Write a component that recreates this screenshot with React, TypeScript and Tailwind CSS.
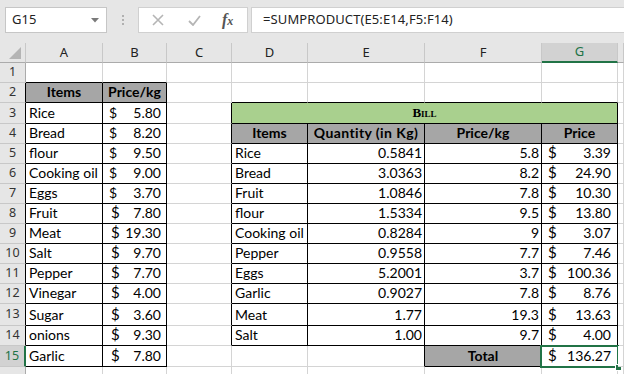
import React from "react";

const COLS = [
  "w-[26px]",
  "w-[77px]",
  "w-[64px]",
  "w-[65px]",
  "w-[76px]",
  "w-[117px]",
  "w-[117px]",
  "w-[76px]",
  "flex-1",
];
const LETTERS = ["", "A", "B", "C", "D", "E", "F", "G", ""];

const ROWH = [
  "",
  "h-[20px]",
  "h-[20px]",
  "h-[21px]",
  "h-[20px]",
  "h-[20px]",
  "h-[20px]",
  "h-[20px]",
  "h-[20px]",
  "h-[20px]",
  "h-[20px]",
  "h-[20px]",
  "h-[20px]",
  "h-[22px]",
  "h-[20px]",
  "h-[21px]",
];

const LEFT: [string, string, boolean][] = [
  ["Rice", "5.80", false],
  ["Bread", "8.20", false],
  ["flour", "9.50", false],
  ["Cooking oil", "9.00", false],
  ["Eggs", "3.70", false],
  ["Fruit", "7.80", true],
  ["Meat", "19.30", true],
  ["Salt", "9.70", true],
  ["Pepper", "7.70", true],
  ["Vinegar", "4.00", true],
  ["Sugar", "3.60", true],
  ["onions", "9.30", true],
  ["Garlic", "7.80", true],
];

const BILL: [string, string, string, string][] = [
  ["Rice", "0.5841", "5.8", "3.39"],
  ["Bread", "3.0363", "8.2", "24.90"],
  ["Fruit", "1.0846", "7.8", "10.30"],
  ["flour", "1.5334", "9.5", "13.80"],
  ["Cooking oil", "0.8284", "9", "3.07"],
  ["Pepper", "0.9558", "7.7", "7.46"],
  ["Eggs", "5.2001", "3.7", "100.36"],
  ["Garlic", "0.9027", "7.8", "8.76"],
  ["Meat", "1.77", "19.3", "13.63"],
  ["Salt", "1.00", "9.7", "4.00"],
];

function inTable(r: number, c: number) {
  if (c >= 1 && c <= 2 && r >= 2 && r <= 15) return true;
  if (c >= 4 && c <= 7 && r >= 3 && r <= 14) return true;
  if ((c === 6 || c === 7) && r === 15) return true;
  return false;
}

const cellFont = "font-['Lato','Carlito',sans-serif] text-[14px] leading-[17px] text-black";

function Cell({
  r,
  c,
  children,
  bg = "bg-white",
  className = "",
}: {
  r: number;
  c: number;
  children?: React.ReactNode;
  bg?: string;
  className?: string;
}) {
  const rightBlack = inTable(r, c) || inTable(r, c + 1);
  const bottomBlack = inTable(r, c) || inTable(r + 1, c);
  return (
    <div
      className={`relative shrink-0 ${COLS[c]} ${bg} border-r border-b ${
        rightBlack ? "border-r-black" : "border-r-[#d4d4d4]"
      } ${bottomBlack ? "border-b-black" : "border-b-[#d4d4d4]"} flex items-end pb-[2px] ${cellFont} ${className}`}
    >
      {children}
    </div>
  );
}

function Money({ v, big = false, pl = "pl-[7px]", pr = "pr-[5px]" }: { v: string; big?: boolean; pl?: string; pr?: string }) {
  return (
    <div className={`flex w-full justify-between ${pl} ${pr}`}>
      <span className={big ? "text-[15px]" : ""}>$</span>
      <span>{v}</span>
    </div>
  );
}

function RowHeader({ r }: { r: number }) {
  const sel = r === 15;
  const black = r >= 2 && r <= 14;
  return (
    <div
      className={`shrink-0 ${COLS[0]} ${sel ? "bg-[#d2d2d2] text-[#217346] border-r-2 border-r-[#217346]" : "bg-[#e6e6e6] text-[#333] border-r " + (black ? "border-r-black" : "border-r-[#ababab]")} border-b border-b-[#c8c8c8] flex items-center justify-center font-['Noto_Sans',sans-serif] text-[12.5px]`}
    >
      {r}
    </div>
  );
}

function Row({ r }: { r: number }) {
  const cells: React.ReactNode[] = [];
  let a: React.ReactNode = null;
  let aBg = "bg-white";
  let aCls = "pl-[3px]";
  if (r === 2) {
    a = "Items";
    aBg = "bg-[#a6a6a6]";
    aCls = "justify-center font-bold";
  } else if (r >= 3 && r <= 15) a = LEFT[r - 3][0];
  cells.push(
    <Cell key="a" r={r} c={1} bg={aBg} className={aCls}>
      {a}
    </Cell>
  );
  if (r === 2) {
    cells.push(
      <Cell key="b" r={r} c={2} bg="bg-[#a6a6a6]" className="justify-center font-bold">
        Price/kg
      </Cell>
    );
  } else if (r >= 3 && r <= 15) {
    const it = LEFT[r - 3];
    cells.push(
      <Cell key="b" r={r} c={2}>
        <Money v={it[1]} big={it[2]} pl={it[2] ? "pl-[8px]" : "pl-[6px]"} />
      </Cell>
    );
  } else {
    cells.push(<Cell key="b" r={r} c={2} />);
  }
  cells.push(<Cell key="c" r={r} c={3} />);
  if (r === 3) {
    cells.push(
      <div
        key="bill"
        className="shrink-0 w-[386px] bg-[#a9d08e] border-r border-b border-r-black border-b-black flex items-end justify-center pb-[3px]"
      >
        <span className="font-['Liberation_Serif',serif] font-bold text-[13px] leading-[15px] [font-variant:small-caps] text-black">
          Bill
        </span>
      </div>
    );
  } else if (r === 4) {
    const hd = ["Items", "Quantity (in Kg)", "Price/kg", "Price"];
    hd.forEach((h, i) =>
      cells.push(
        <Cell key={"h" + i} r={r} c={4 + i} bg="bg-[#a6a6a6]" className={`justify-center font-bold ${i === 1 ? "tracking-[0.4px]" : ""}`}>
          {h}
        </Cell>
      )
    );
  } else if (r >= 5 && r <= 14) {
    const it = BILL[r - 5];
    cells.push(
      <Cell key="d" r={r} c={4} className="pl-[3px]">
        {it[0]}
      </Cell>
    );
    cells.push(
      <Cell key="e" r={r} c={5} className="justify-end pr-[2px]">
        {it[1]}
      </Cell>
    );
    cells.push(
      <Cell key="f" r={r} c={6} className="justify-end pr-[2px]">
        {it[2]}
      </Cell>
    );
    cells.push(
      <Cell key="g" r={r} c={7}>
        <Money v={it[3]} big pl="pl-[6px]" pr="pr-[6px]" />
      </Cell>
    );
  } else if (r === 15) {
    cells.push(<Cell key="d" r={r} c={4} />);
    cells.push(<Cell key="e" r={r} c={5} />);
    cells.push(
      <Cell key="f" r={r} c={6} bg="bg-[#a6a6a6]" className="justify-center font-bold">
        Total
      </Cell>
    );
    cells.push(
      <Cell key="g" r={r} c={7}>
        <Money v="136.27" big pl="pl-[6px]" pr="pr-[6px]" />
        <div className="absolute left-[-2px] top-[-1px] right-[-2px] bottom-[-2px] border-2 border-[#217346] pointer-events-none" />
        <div className="absolute right-[-5px] bottom-[-5px] w-[7px] h-[7px] bg-[#217346] border border-white" />
      </Cell>
    );
  } else {
    for (let c = 4; c <= 7; c++) cells.push(<Cell key={"x" + c} r={r} c={c} />);
  }
  cells.push(<Cell key="h" r={r} c={8} />);
  return (
    <div className={`flex ${ROWH[r]}`}>
      <RowHeader r={r} />
      {cells}
    </div>
  );
}

function FormulaBar() {
  return (
    <div className="h-[43px] bg-[#e6e6e6] relative flex items-start pt-[7px] pl-[5px]">
      <div className="w-[102px] h-[26px] bg-white border border-[#c6c6c6] flex items-center pl-[6px] pr-[6px] justify-between">
        <span className="font-['Noto_Sans',sans-serif] text-[13px] text-[#222]">G15</span>
        <svg width="8" height="5" viewBox="0 0 8 5" className="mr-[1px]">
          <path d="M0 0 L8 0 L4 4.5 Z" fill="#7a7a7a" />
        </svg>
      </div>
      <div className="w-[31px] h-[26px] flex flex-col items-center justify-center gap-[2px]">
        <div className="w-[2px] h-[2px] bg-[#b0b0b0]" />
        <div className="w-[2px] h-[2px] bg-[#b0b0b0]" />
        <div className="w-[2px] h-[2px] bg-[#b0b0b0]" />
      </div>
      <div className="w-[110px] h-[26px] bg-white border border-[#d0d0d0] flex items-center">
        <svg width="12" height="12" viewBox="0 0 12 12" className="ml-[13px]">
          <path d="M1 1 L11 11 M11 1 L1 11" stroke="#b5b5b5" strokeWidth="1.6" />
        </svg>
        <svg width="13" height="11" viewBox="0 0 13 11" className="ml-[24px]">
          <path d="M1 6 L5 10 L12 1" stroke="#b5b5b5" strokeWidth="1.8" fill="none" />
        </svg>
        <span className="ml-[21px] font-['Liberation_Serif',serif] italic font-bold text-[16px] text-[#555] leading-none">
          f<span className="text-[12px]">x</span>
        </span>
      </div>
      <div className="ml-[3px] flex-1 h-[26px] bg-white border border-[#d0d0d0] border-r-0 flex items-center pl-[11px]">
        <span className="font-['Noto_Sans',sans-serif] text-[13px] tracking-[0.1px] text-[#222]">=SUMPRODUCT(E5:E14,F5:F14)</span>
      </div>
    </div>
  );
}

function ColHeader() {
  return (
    <div className="flex h-[20px]">
      <div className={`shrink-0 ${COLS[0]} bg-[#e6e6e6] border-r border-b border-r-[#c8c8c8] border-b-[#ababab] relative`}>
        <svg width="12" height="12" viewBox="0 0 12 12" className="absolute right-[4px] bottom-[3px]">
          <path d="M12 0 L12 12 L0 12 Z" fill="#b4b4b4" />
        </svg>
      </div>
      {LETTERS.slice(1).map((l, i) => {
        const c = i + 1;
        const sel = c === 7;
        return (
          <div
            key={c}
            className={`shrink-0 ${COLS[c]} ${sel ? "bg-[#d2d2d2] text-[#217346] border-b-2 border-b-[#217346]" : "bg-[#e6e6e6] text-[#222] border-b border-b-[#ababab]"} border-r border-r-[#c8c8c8] flex items-center justify-center font-['Noto_Sans',sans-serif] text-[13px]`}
          >
            {l}
          </div>
        );
      })}
    </div>
  );
}

export default function App() {
  const rows = [];
  for (let r = 1; r <= 15; r++) rows.push(<Row key={r} r={r} />);
  return (
    <div className="w-[624px] h-[374px] overflow-hidden bg-white">
      <FormulaBar />
      <ColHeader />
      {rows}
      <div className="flex h-[10px]">
        <div className={`shrink-0 ${COLS[0]} bg-[#e6e6e6] border-r border-r-[#ababab]`} />
        {[1, 2, 3, 4, 5, 6, 7, 8].map((c) => (
          <div key={c} className={`shrink-0 ${COLS[c]} border-r border-r-[#d4d4d4]`} />
        ))}
      </div>
    </div>
  );
}
